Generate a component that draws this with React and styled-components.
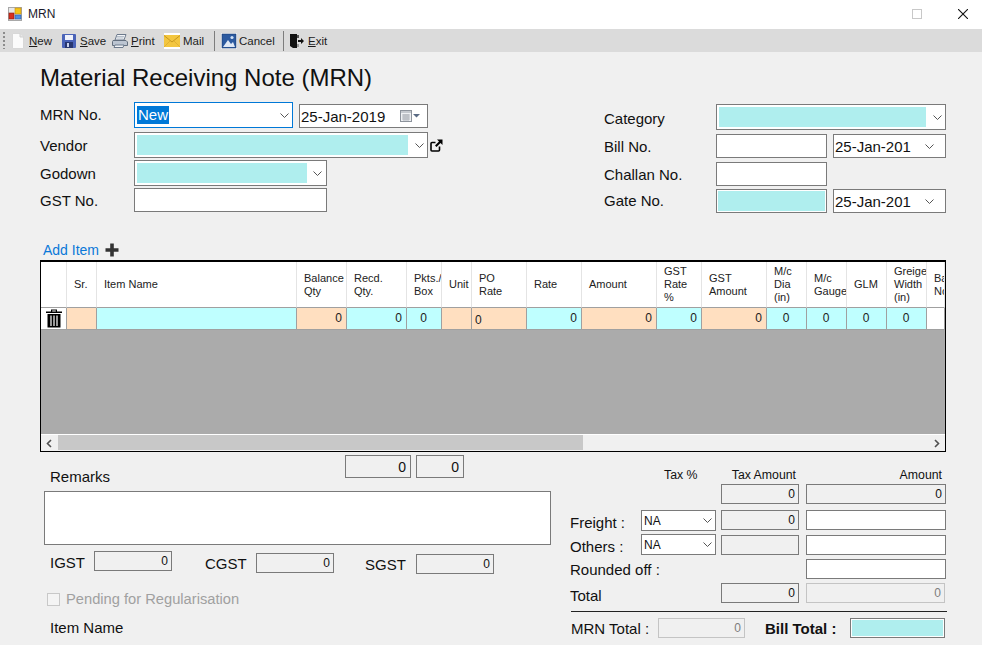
import React from 'react';
import styled, { createGlobalStyle } from 'styled-components';

const GlobalStyle = createGlobalStyle`
    html, body {
        margin: 0;
        padding: 0;
        background: #f0f0f0;
    }
    * {
        box-sizing: border-box;
    }
`;

const Windowed = styled.div`
    width: 982px;
    height: 645px;
    overflow: hidden;
    display: flex;
    flex-direction: column;
    background: #f0f0f0;
    color: #111;
    font-family: "Liberation Sans", Arial, sans-serif;
    font-size: 15px;
`;

const TitleBar = styled.div`
    height: 29px;
    flex: none;
    background: #fff;
    display: flex;
    align-items: center;
    padding: 0 14px 2px 8px;
    font-size: 12px;
`;

const TitleText = styled.span`
    margin-left: 6px;
    flex: 1;
    color: #1a1a2a;
`;

const WindowButton = styled.svg`
    width: 10px;
    height: 10px;
    margin-left: ${(p) => p.$gap}px;
`;

const ToolBar = styled.div`
    height: 23px;
    flex: none;
    background: #dbdbdb;
    display: flex;
    align-items: center;
    padding-left: 3px;
    font-size: 11.5px;
    color: #1c1c1c;
`;

const Grip = styled.div`
    width: 2px;
    height: 17px;
    margin-right: 7px;
    background: repeating-linear-gradient(to bottom, #8c8c8c 0 2px, transparent 2px 4px);
`;

const ToolButton = styled.div`
    display: flex;
    align-items: center;
    flex: none;
    width: ${(p) => p.$width}px;
    gap: ${(p) => p.$gap}px;
`;

const ToolSeparator = styled.div`
    width: 1px;
    height: 20px;
    background: #7d7d7d;
    margin-right: 6px;
`;

const Under = styled.span`
    text-decoration: underline;
`;

const Content = styled.div`
    flex: 1;
    display: flex;
    flex-direction: column;
    padding: 0 36px 0 40px;
`;

const Heading = styled.h1`
    margin: 0;
    height: 50px;
    padding-top: 12px;
    font-size: 24px;
    line-height: 28px;
    font-weight: 400;
    color: #111;
`;

const HeaderPanel = styled.div`
    display: flex;
    height: 111px;
`;

const HeaderColumn = styled.div`
    display: flex;
    flex-direction: column;
    padding-top: ${(p) => p.$top || 0}px;
    width: ${(p) => p.$width}px;
`;

const FormRow = styled.div`
    display: flex;
    align-items: center;
    height: ${(p) => p.$height}px;
    margin-bottom: ${(p) => p.$after || 0}px;
`;

const FormLabel = styled.div`
    width: ${(p) => p.$width}px;
    flex: none;
    margin-top: ${(p) => (p.$nudge || 0) * 2}px;
`;

const Box = styled.div`
    position: relative;
    flex: none;
    display: flex;
    align-items: center;
    width: ${(p) => p.$width}px;
    height: ${(p) => p.$height}px;
    margin-left: ${(p) => p.$left || 0}px;
    margin-top: ${(p) => p.$top || 0}px;
    background: ${(p) => (p.$readOnly ? '#f0f0f0' : '#fff')};
    border: 1px solid ${(p) => (p.$focus ? '#0078d7' : p.$faint ? '#c4c4c4' : '#7a7a7a')};
    color: ${(p) => (p.$faint ? '#7d7d7d' : '#111')};
    padding: 0 2px;
`;

const FilledBox = styled(Box)`
    padding: 1px;
`;

const Fill = styled.div`
    flex: 1;
    align-self: stretch;
    background: #afeeee;
`;

const ComboFill = styled(Fill)`
    margin: 2px 0;
`;

const Selected = styled.span`
    background: #0078d7;
    color: #fff;
    line-height: 18px;
    display: inline-block;
    padding: 0 1px;
`;

const DateText = styled.span`
    flex: 1;
    margin-left: -1px;
    white-space: nowrap;
    overflow: hidden;
`;

const ComboText = styled.span`
    flex: 1;
    font-size: ${(p) => p.$size || 15}px;
`;

const Chevron = styled.svg`
    flex: none;
    width: 9px;
    height: 5px;
    margin: 0 ${(p) => p.$right}px 0 ${(p) => p.$left}px;
`;

const AddRow = styled.div`
    display: flex;
    align-items: center;
    height: 21px;
    margin-top: 26px;
    padding-left: 3px;
    color: #0a78d8;
    font-size: 14px;
    gap: 6px;
`;

const ItemGrid = styled.div`
    height: 192px;
    flex: none;
    display: flex;
    flex-direction: column;
    border: 1px solid #000;
    border-top-width: 2px;
    background: #ababab;
    font-size: 11px;
`;

const GridRow = styled.div`
    display: grid;
    grid-template-columns: ${(p) => p.$columns};
    height: ${(p) => p.$height}px;
    flex: none;
`;

const HeadCell = styled.div`
    background: #fff;
    border-right: 1px solid #e4e4e4;
    border-bottom: 1px solid #a0a0a0;
    padding-left: 7px;
    display: flex;
    align-items: center;
    line-height: 13px;
    white-space: pre;
    overflow: hidden;
    color: #222;
`;

const TONES = { peach: '#ffdfc0', cyan: '#bfffff', white: '#fff' };

const BodyCell = styled.div`
    background: ${(p) => TONES[p.$tone]};
    border-right: 1px solid #a0a0a0;
    border-bottom: 1px solid #a0a0a0;
    display: flex;
    align-items: ${(p) => (p.$align === 'left' ? 'flex-end' : 'center')};
    justify-content: ${(p) => ({ right: 'flex-end', center: 'center', left: 'flex-start' })[p.$align]};
    padding: 0 4px 2px 3px;
    font-size: 12px;
    color: #222;
`;

const DeleteCell = styled.div`
    background: #fff;
    border-right: 1px solid #a0a0a0;
    border-bottom: 1px solid #a0a0a0;
    display: flex;
    align-items: center;
    justify-content: center;
`;

const GridFiller = styled.div`
    flex: 1;
`;

const ScrollBar = styled.div`
    height: 17px;
    flex: none;
    display: flex;
    align-items: center;
    background: #f0f0f0;
    border-top: 1px solid #fff;
`;

const ScrollArrow = styled.svg`
    width: 17px;
    height: 9px;
    flex: none;
`;

const ScrollThumb = styled.div`
    width: 525px;
    height: 15px;
    background: #c8c8c8;
`;

const ScrollTrack = styled.div`
    flex: 1;
    display: flex;
    align-self: flex-start;
`;

const BottomPanel = styled.div`
    flex: 1;
    display: flex;
    padding-left: 4px;
`;

const BottomLeft = styled.div`
    width: 507px;
    display: flex;
    flex-direction: column;
`;

const BottomRight = styled.div`
    margin-left: 19px;
    width: 377px;
    display: flex;
    flex-direction: column;
`;

const RemarksRow = styled.div`
    display: flex;
    height: 28px;
    margin-top: 3px;
`;

const RemarksLabel = styled.div`
    width: 301px;
    padding-left: 6px;
    padding-top: 13px;
    line-height: 17px;
`;

const BoxNumber = styled.span`
    flex: 1;
    text-align: right;
    padding-right: ${(p) => p.$pad || 1}px;
    font-size: ${(p) => p.$size || 12}px;
    line-height: 1;
`;

const RemarksBox = styled.div`
    width: 507px;
    height: 54px;
    margin-top: 8px;
    background: #fff;
    border: 1px solid #7a7a7a;
`;

const TaxRow = styled.div`
    display: flex;
    align-items: flex-start;
    height: 24px;
    margin-top: 6px;
`;

const TaxLabel = styled.div`
    width: ${(p) => p.$width}px;
    margin-left: ${(p) => p.$left || 0}px;
    padding-top: ${(p) => p.$top}px;
    line-height: 17px;
    flex: none;
`;

const PendingRow = styled.div`
    display: flex;
    align-items: center;
    gap: 6px;
    margin-top: 15px;
    height: 18px;
    padding-left: 3px;
    color: #a0a0a0;
    font-size: 14.7px;
`;

const CheckBox = styled.div`
    width: 13px;
    height: 13px;
    border: 1px solid #c8c8c8;
    background: #f4f4f4;
`;

const ItemNameLabel = styled.div`
    margin-top: 11px;
    padding-left: 6px;
    line-height: 17px;
`;

const TOTAL_COLUMNS = '66px 75px 78px 140px';

const HeadRow = styled.div`
    display: grid;
    grid-template-columns: ${TOTAL_COLUMNS};
    column-gap: 5px;
    height: 14px;
    margin-top: 16px;
`;

const ColumnHead = styled.div`
    font-size: 12.3px;
    text-align: ${(p) => p.$align};
    padding-right: ${(p) => p.$pad || 0}px;
    padding-left: ${(p) => p.$padLeft || 0}px;
    grid-column: ${(p) => p.$col};
    white-space: nowrap;
`;

const TotalsGrid = styled.div`
    display: grid;
    grid-template-columns: ${TOTAL_COLUMNS};
    grid-template-rows: 26px 25px 24px 24px 20px;
    column-gap: 5px;
    margin-top: 2px;
    align-items: start;
`;

const TotalLabel = styled.div`
    grid-column: ${(p) => p.$span || 1};
    grid-row: ${(p) => p.$row};
    white-space: nowrap;
    line-height: 20px;
    padding-top: ${(p) => p.$nudge || 0}px;
`;

const Cell = styled.div`
    grid-column: ${(p) => p.$col};
    grid-row: ${(p) => p.$row};
    margin-left: ${(p) => p.$shift || 0}px;
    margin-top: ${(p) => p.$lift || 0}px;
    display: flex;
`;

const Rule = styled.div`
    height: 1px;
    background: #222;
    margin: 8px 0 0 1px;
    width: 376px;
`;

const GrandRow = styled.div`
    display: flex;
    align-items: center;
    height: 20px;
    margin-top: 6px;
    white-space: nowrap;
`;

const GrandLabel = styled.span`
    width: 88px;
    flex: none;
    padding-left: 1px;
`;

const BoldLabel = styled.span`
    margin-left: 20px;
    font-weight: 700;
    width: 85px;
    flex: none;
`;

const GRID_COLUMNS = '26px 30px 200px 50px 60px 35px 30px 55px 55px 75px 45px 65px 40px 40px 40px 40px 18px';

const columns = [
    { head: 'Sr.', tone: 'peach', align: 'right', value: '' },
    { head: 'Item Name', tone: 'cyan', align: 'right', value: '' },
    { head: 'Balance\nQty', tone: 'peach', align: 'right', value: '0' },
    { head: 'Recd.\nQty.', tone: 'cyan', align: 'right', value: '0' },
    { head: 'Pkts./\nBox', tone: 'cyan', align: 'center', value: '0' },
    { head: 'Unit', tone: 'peach', align: 'right', value: '' },
    { head: 'PO\nRate', tone: 'peach', align: 'left', value: '0' },
    { head: 'Rate', tone: 'cyan', align: 'right', value: '0' },
    { head: 'Amount', tone: 'peach', align: 'right', value: '0' },
    { head: 'GST\nRate\n%', tone: 'cyan', align: 'right', value: '0' },
    { head: 'GST\nAmount', tone: 'peach', align: 'right', value: '0' },
    { head: 'M/c\nDia\n(in)', tone: 'cyan', align: 'center', value: '0' },
    { head: 'M/c\nGauge', tone: 'cyan', align: 'center', value: '0' },
    { head: 'GLM', tone: 'cyan', align: 'center', value: '0' },
    { head: 'Greige\nWidth\n(in)', tone: 'cyan', align: 'center', value: '0' },
    { head: 'Bale\nNo.', tone: 'white', align: 'right', value: '' },
];

function ChevronIcon({ left = 7, right = 1 }) {
    return (
        <Chevron $left={left} $right={right} viewBox="0 0 9 5">
            <path d="M0.5 0.5 L4.5 4.5 L8.5 0.5" fill="none" stroke="#555" strokeWidth="1" />
        </Chevron>
    );
}

function AppIcon() {
    return (
        <svg width="14" height="14" viewBox="0 0 14 14">
            <rect x="0.5" y="0.5" width="13" height="13" fill="#e8e8e8" stroke="#a8a8a8" />
            <rect x="7" y="1" width="6" height="6" fill="#f5c518" stroke="#c08a10" strokeWidth="0.6" />
            <rect x="1" y="6" width="5" height="6" fill="#d8301f" stroke="#8a1a10" strokeWidth="0.6" />
            <rect x="7" y="8" width="6" height="4" fill="#4f8fe0" stroke="#2a5aa8" strokeWidth="0.6" />
        </svg>
    );
}

function NewIcon() {
    return (
        <svg width="12" height="16" viewBox="0 0 12 16">
            <path d="M0.5 0.5 H8 L11.5 4 V15.5 H0.5 Z" fill="#fbfbfb" stroke="#d8d8d8" />
            <path d="M8 0.5 V4 H11.5" fill="#e6e6e6" stroke="#cfcfcf" />
        </svg>
    );
}

function SaveIcon() {
    return (
        <svg width="14" height="14" viewBox="0 0 14 14">
            <rect x="0" y="0" width="14" height="14" rx="1" fill="#4a63b8" />
            <rect x="3" y="1" width="8" height="5" fill="#eef1fa" />
            <rect x="3" y="8" width="8" height="6" fill="#27366f" />
            <rect x="5" y="9" width="2" height="4" fill="#c9d2ee" />
        </svg>
    );
}

function PrintIcon() {
    return (
        <svg width="16" height="14" viewBox="0 0 16 14">
            <path d="M5 0.5 H14 L12 6 H3 Z" fill="#f2f4f7" stroke="#6c7a8c" />
            <path d="M1 6.5 H14 L15.5 8 V11.5 H0.5 V7.5 Z" fill="#bcc5d1" stroke="#64707f" />
            <path d="M3 11 H12 L11 13.5 H2 Z" fill="#f2f4f7" stroke="#6c7a8c" />
            <path d="M5 2.5 H12 M4.5 4 H11.5" stroke="#9aa5b3" strokeWidth="0.7" />
        </svg>
    );
}

function MailIcon() {
    return (
        <svg width="16" height="16" viewBox="0 0 16 16">
            <rect x="0" y="0" width="16" height="16" fill="#fff" />
            <rect x="0" y="2" width="16" height="12" fill="#f3c63f" />
            <path d="M0 2.5 L8 9 L16 2.5" fill="none" stroke="#b98a18" strokeWidth="0.8" />
            <path d="M0 14 L6 8 M16 14 L10 8" stroke="#d8a72c" strokeWidth="0.7" />
        </svg>
    );
}

function CancelIcon() {
    return (
        <svg width="16" height="16" viewBox="0 0 16 16">
            <rect x="0" y="0" width="16" height="16" fill="#fff" />
            <rect x="1" y="1" width="14" height="14" fill="#2c5aa0" stroke="#1a3a70" strokeWidth="0.6" />
            <path d="M2 14 L7 7 L10 11 L12 9 L14 14 Z" fill="#dfe8f5" />
            <circle cx="11" cy="4.5" r="1.6" fill="#cfe0f6" />
        </svg>
    );
}

function ExitIcon() {
    return (
        <svg width="14" height="14" viewBox="0 0 14 14">
            <path d="M0 0 H7 V14 L3 14 L0 12 Z" fill="#111" />
            <rect x="7" y="1" width="2" height="3" fill="#555" />
            <rect x="7" y="10" width="2" height="3" fill="#999" />
            <path d="M8 6 H11 V4 L14 7 L11 10 V8 H8 Z" fill="#111" />
        </svg>
    );
}

function CalendarIcon() {
    return (
        <svg width="22" height="13" viewBox="0 0 22 13" style={{ marginRight: 4, flex: 'none' }}>
            <rect x="1.5" y="0.5" width="11" height="11" fill="#eef0f3" stroke="#8d939c" />
            <rect x="2" y="1" width="10" height="2" fill="#c4c8ce" />
            <path d="M3 5 H11 M3 7 H11 M3 9 H11 M5 4 V11 M7 4 V11 M9 4 V11" stroke="#a2a7af" strokeWidth="0.8" />
            <path d="M14 4 H21 L17.5 7.5 Z" fill="#5a6b84" />
        </svg>
    );
}

function ExternalIcon() {
    return (
        <svg width="13" height="13" viewBox="0 0 13 13" style={{ marginLeft: 2, flex: 'none' }}>
            <path d="M9.5 7.5 V11 A1 1 0 0 1 8.5 12 H2 A1 1 0 0 1 1 11 V4.5 A1 1 0 0 1 2 3.5 H5.5" fill="none" stroke="#000" strokeWidth="1.6" />
            <path d="M7 0.5 H12.5 V6 L10.5 4 L6.5 8 L5 6.5 L9 2.5 Z" fill="#000" />
        </svg>
    );
}

function PlusIcon() {
    return (
        <svg width="14" height="14" viewBox="0 0 14 14">
            <path d="M5.2 0.5 H8.8 V5.2 H13.5 V8.8 H8.8 V13.5 H5.2 V8.8 H0.5 V5.2 H5.2 Z" fill="#333" />
        </svg>
    );
}

function TrashIcon() {
    return (
        <svg width="18" height="19" viewBox="0 0 18 19">
            <path d="M6 0.5 H12 V2.5 H17 V4 H1 V2.5 H6 Z M7.2 1.5 V2.5 H10.8 V1.5 Z" fill="#000" fillRule="evenodd" />
            <path d="M2.5 5 H15.5 V18.5 H2.5 Z" fill="#000" />
            <path d="M6 6.5 V17 M9 6.5 V17 M12 6.5 V17" stroke="#fff" strokeWidth="1.2" />
        </svg>
    );
}

function CyanCombo({ width, chevronLeft, chevronRight }) {
    return (
        <Box $width={width} $height={26}>
            <ComboFill />
            <ChevronIcon left={chevronLeft} right={chevronRight} />
        </Box>
    );
}

function DateCombo() {
    return (
        <Box $width={113} $height={24} $left={6}>
            <DateText>25-Jan-201</DateText>
            <ChevronIcon left={0} right={9} />
        </Box>
    );
}

function TaxCombo() {
    return (
        <Box $width={75} $height={21}>
            <ComboText $size={12}>NA</ComboText>
            <ChevronIcon left={3} right={1} />
        </Box>
    );
}

function ReadOnly({ width, height = 20, left, top, size, pad, faint, children }) {
    return (
        <Box $readOnly $faint={faint} $width={width} $height={height} $left={left} $top={top}>
            <BoxNumber $size={size} $pad={pad}>{children}</BoxNumber>
        </Box>
    );
}

function App() {
    return (
        <Windowed>
            <GlobalStyle />
            <TitleBar>
                <AppIcon />
                <TitleText>MRN</TitleText>
                <WindowButton viewBox="0 0 10 10" $gap={0}>
                    <rect x="0.5" y="0.5" width="9" height="9" fill="none" stroke="#c8c8c8" />
                </WindowButton>
                <WindowButton viewBox="0 0 10 10" $gap={36}>
                    <path d="M0 0 L10 10 M10 0 L0 10" stroke="#111" strokeWidth="1.1" />
                </WindowButton>
            </TitleBar>
            <ToolBar>
                <Grip />
                <ToolButton $width={50} $gap={5}><NewIcon /><span><Under>N</Under>ew</span></ToolButton>
                <ToolButton $width={50} $gap={4}><SaveIcon /><span><Under>S</Under>ave</span></ToolButton>
                <ToolButton $width={52} $gap={3}><PrintIcon /><span><Under>P</Under>rint</span></ToolButton>
                <ToolButton $width={50} $gap={3}><MailIcon /><span>Mail</span></ToolButton>
                <ToolSeparator />
                <ToolButton $width={62} $gap={2}><CancelIcon /><span>Cancel</span></ToolButton>
                <ToolSeparator />
                <ToolButton $width={40} $gap={4}><ExitIcon /><span><Under>E</Under>xit</span></ToolButton>
            </ToolBar>
            <Content>
                <Heading>Material Receiving Note (MRN)</Heading>
                <HeaderPanel>
                    <HeaderColumn $width={564}>
                        <FormRow $height={26} $after={4}>
                            <FormLabel $width={94} $nudge={-1}>MRN No.</FormLabel>
                            <Box $focus $width={159} $height={26}>
                                <ComboText><Selected>New</Selected></ComboText>
                                <ChevronIcon left={5} right={1} />
                            </Box>
                            <Box $width={129} $height={24} $left={6} $top={2}>
                                <DateText>25-Jan-2019</DateText>
                                <CalendarIcon />
                            </Box>
                        </FormRow>
                        <FormRow $height={26} $after={2}>
                            <FormLabel $width={94}>Vendor</FormLabel>
                            <CyanCombo width={294} />
                            <ExternalIcon />
                        </FormRow>
                        <FormRow $height={26} $after={2}>
                            <FormLabel $width={94}>Godown</FormLabel>
                            <CyanCombo width={193} chevronLeft={6} chevronRight={2} />
                        </FormRow>
                        <FormRow $height={24}>
                            <FormLabel $width={94}>GST No.</FormLabel>
                            <Box $width={193} $height={24} />
                        </FormRow>
                    </HeaderColumn>
                    <HeaderColumn $width={342} $top={2}>
                        <FormRow $height={26} $after={4}>
                            <FormLabel $width={112} $nudge={1}>Category</FormLabel>
                            <CyanCombo width={230} />
                        </FormRow>
                        <FormRow $height={24} $after={4}>
                            <FormLabel $width={112}>Bill No.</FormLabel>
                            <Box $width={111} $height={24} />
                            <DateCombo />
                        </FormRow>
                        <FormRow $height={24} $after={3}>
                            <FormLabel $width={112}>Challan No.</FormLabel>
                            <Box $width={111} $height={24} />
                        </FormRow>
                        <FormRow $height={24}>
                            <FormLabel $width={112} $nudge={-1}>Gate No.</FormLabel>
                            <FilledBox $width={111} $height={24}><Fill /></FilledBox>
                            <DateCombo />
                        </FormRow>
                    </HeaderColumn>
                </HeaderPanel>
                <AddRow>Add Item <PlusIcon /></AddRow>
                <ItemGrid>
                    <GridRow $columns={GRID_COLUMNS} $height={46}>
                        <HeadCell />
                        {columns.map((col) => (
                            <HeadCell key={col.head}>{col.head}</HeadCell>
                        ))}
                    </GridRow>
                    <GridRow $columns={GRID_COLUMNS} $height={22}>
                        <DeleteCell><TrashIcon /></DeleteCell>
                        {columns.map((col) => (
                            <BodyCell key={col.head} $tone={col.tone} $align={col.align}>{col.value}</BodyCell>
                        ))}
                    </GridRow>
                    <GridFiller />
                    <ScrollBar>
                        <ScrollArrow viewBox="0 0 17 9">
                            <path d="M10 1 L6.5 4.5 L10 8" fill="none" stroke="#505050" strokeWidth="1.6" />
                        </ScrollArrow>
                        <ScrollTrack><ScrollThumb /></ScrollTrack>
                        <ScrollArrow viewBox="0 0 17 9">
                            <path d="M7 1 L10.5 4.5 L7 8" fill="none" stroke="#505050" strokeWidth="1.6" />
                        </ScrollArrow>
                    </ScrollBar>
                </ItemGrid>
                <BottomPanel>
                    <BottomLeft>
                        <RemarksRow>
                            <RemarksLabel>Remarks</RemarksLabel>
                            <ReadOnly width={66} height={23} size={14} pad={2}>0</ReadOnly>
                            <ReadOnly width={48} height={23} left={5} size={14} pad={2}>0</ReadOnly>
                        </RemarksRow>
                        <RemarksBox />
                        <TaxRow>
                            <TaxLabel $width={44} $left={6} $top={3}>IGST</TaxLabel>
                            <ReadOnly width={78}>0</ReadOnly>
                            <TaxLabel $width={51} $left={33} $top={4}>CGST</TaxLabel>
                            <ReadOnly width={78} top={2}>0</ReadOnly>
                            <TaxLabel $width={51} $left={31} $top={5}>SGST</TaxLabel>
                            <ReadOnly width={78} top={3}>0</ReadOnly>
                        </TaxRow>
                        <PendingRow><CheckBox />Pending for Regularisation</PendingRow>
                        <ItemNameLabel>Item Name</ItemNameLabel>
                    </BottomLeft>
                    <BottomRight>
                        <HeadRow>
                            <ColumnHead $col="2" $align="left" $padLeft={23}>Tax %</ColumnHead>
                            <ColumnHead $col="3" $align="right" $pad={3}>Tax Amount</ColumnHead>
                            <ColumnHead $col="4" $align="right" $pad={2}>Amount</ColumnHead>
                        </HeadRow>
                        <TotalsGrid>
                            <Cell $row={1} $col={3}><ReadOnly width={78}>0</ReadOnly></Cell>
                            <Cell $row={1} $col={4} $shift={2}><ReadOnly width={140}>0</ReadOnly></Cell>

                            <TotalLabel $row={2} $nudge={3}>Freight :</TotalLabel>
                            <Cell $row={2} $col={2}><TaxCombo /></Cell>
                            <Cell $row={2} $col={3}><ReadOnly width={78}>0</ReadOnly></Cell>
                            <Cell $row={2} $col={4} $shift={2}><Box $width={140} $height={20} /></Cell>

                            <TotalLabel $row={3} $nudge={2}>Others :</TotalLabel>
                            <Cell $row={3} $col={2} $lift={-1}><TaxCombo /></Cell>
                            <Cell $row={3} $col={3}><ReadOnly width={78} /></Cell>
                            <Cell $row={3} $col={4} $shift={2}><Box $width={140} $height={20} /></Cell>

                            <TotalLabel $row={4} $span="1 / span 2" $nudge={1}>Rounded off :</TotalLabel>
                            <Cell $row={4} $col={4} $shift={2}><Box $width={140} $height={20} /></Cell>

                            <TotalLabel $row={5} $nudge={3}>Total</TotalLabel>
                            <Cell $row={5} $col={3}><ReadOnly width={78}>0</ReadOnly></Cell>
                            <Cell $row={5} $col={4} $shift={2}><ReadOnly faint width={139}>0</ReadOnly></Cell>
                        </TotalsGrid>
                        <Rule />
                        <GrandRow>
                            <GrandLabel>MRN Total :</GrandLabel>
                            <ReadOnly faint width={87}>0</ReadOnly>
                            <BoldLabel>Bill Total :</BoldLabel>
                            <FilledBox $width={95} $height={20}><Fill /></FilledBox>
                        </GrandRow>
                    </BottomRight>
                </BottomPanel>
            </Content>
        </Windowed>
    );
}

export default App;
